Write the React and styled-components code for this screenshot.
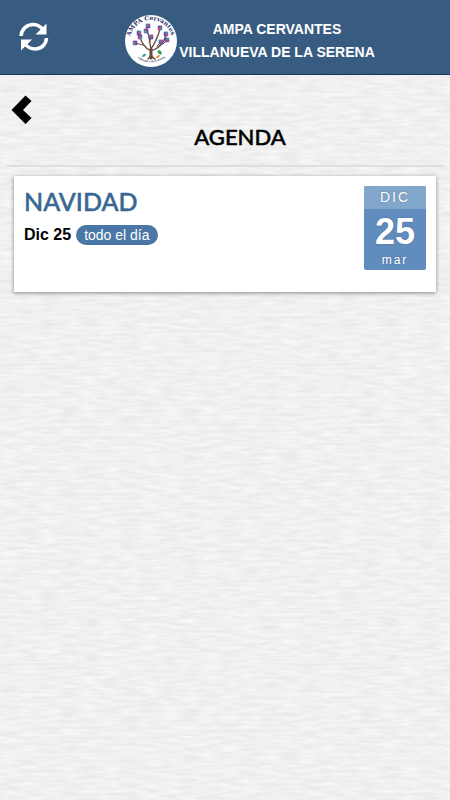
import React from "react";
import styled, { createGlobalStyle } from "styled-components";

const paper = encodeURIComponent(
  `<svg xmlns="http://www.w3.org/2000/svg" width="300" height="300"><filter id="p" x="0" y="0" width="100%" height="100%" color-interpolation-filters="sRGB"><feTurbulence type="fractalNoise" baseFrequency="0.05 0.3" numOctaves="3" seed="8" stitchTiles="stitch"/><feColorMatrix values="0.09 0 0 0 0.897  0.09 0 0 0 0.897  0.09 0 0 0 0.897  0 0 0 0 1"/></filter><rect width="300" height="300" filter="url(#p)"/></svg>`
);

const GlobalStyle = createGlobalStyle`
  *, *::before, *::after { box-sizing: border-box; }
  body {
    margin: 0;
    background: #f0f0f0 url("data:image/svg+xml,${paper}");
    font-family: "Liberation Sans", Arial, sans-serif;
    color: #000;
  }
`;

const Page = styled.div`
  min-height: 100vh;
`;

const Header = styled.header`
  display: grid;
  grid-template-columns: 68px 1fr 18px;
  align-items: center;
  height: 75px;
  background: #385c81;
  border-bottom: 1px solid #17375b;
`;

const IconButton = styled.button`
  display: flex;
  padding: 0;
  border: 0;
  background: none;
  color: ${(p) => p.$color};
  cursor: pointer;
`;

const HeaderAction = styled.div`
  padding-left: 18px;
`;

const Brand = styled.div`
  display: flex;
  align-items: center;
  justify-content: center;
  gap: 2px;
  padding-top: 8px;
  min-width: 0;
`;

const BrandName = styled.div`
  font-weight: bold;
  font-size: 14px;
  line-height: 23px;
  color: #fff;
  text-align: center;
  white-space: nowrap;
`;

const BackBar = styled.nav`
  padding: 20px 11px 0;
`;

const Title = styled.h1`
  margin: 0 7px;
  padding: 0 0 16px 30px;
  border-bottom: 2px solid #dfdfdf;
  font: 500 22px/24px Lato, sans-serif;
  -webkit-text-stroke: 0.5px currentColor;
  text-align: center;
`;

const EventCard = styled.article`
  display: flex;
  justify-content: space-between;
  align-items: flex-start;
  min-height: 116px;
  margin: 9px 14px 0;
  padding: 10px;
  background: #fff;
  box-shadow: 0 1px 4px rgba(0, 0, 0, 0.45);
`;

const EventTitle = styled.h2`
  margin: 0;
  font: 500 25px/31px Lato, sans-serif;
  color: #386793;
  -webkit-text-stroke: 0.5px currentColor;
`;

const EventMeta = styled.div`
  display: flex;
  align-items: center;
  gap: 5px;
  padding-top: 8px;
  font-size: 16px;
  line-height: 20px;
`;

const Pill = styled.span`
  padding: 0 8px;
  border-radius: 10px;
  background: #4a77a5;
  color: #fff;
  font-size: 14px;
`;

const DateBadge = styled.time`
  display: flex;
  flex-direction: column;
  width: 62px;
  height: 84px;
  overflow: hidden;
  border-radius: 2px;
  background: #608dbd;
  color: #fff;
  text-align: center;
  text-shadow: 0 0 2px rgba(30, 60, 100, 0.4);
`;

const Month = styled.span`
  background: #83a7cc;
  font-size: 14px;
  line-height: 23px;
  letter-spacing: 2px;
`;

const Day = styled.strong`
  font-size: 36px;
  line-height: 45px;
`;

const Weekday = styled.span`
  font-size: 12px;
  line-height: 12px;
  letter-spacing: 2px;
`;

const petals = ["#7b42a8", "#2d9db5", "#cc3f8f", "#3f58b5"];
const blooms = [
  [14, 18], [23, 11], [21, 16], [35, 13], [41, 19], [26, 22], [10, 28], [15, 22], [42, 25], [36, 27],
];

function Refresh() {
  return (
    <svg width="32" height="32" viewBox="0 0 32 32" aria-hidden="true">
      <g fill="none" stroke="currentColor" strokeWidth="3.500">
        <path d="M3 15C3.500 8 9 3.500 15 3.500c4 0 7.500 2 10 5" />
        <path d="M28.500 17C28 24 23 28 17 28c-4 0-7.500-2-10-5" />
      </g>
      <path fill="currentColor" d="M28.500 2.500V13.500H17.500zM3 29.500V18.500H14z" />
    </svg>
  );
}

function Back() {
  return (
    <svg width="22" height="30" viewBox="0 0 22 30" aria-hidden="true">
      <path d="M14.500 .5 20.500 6 12 15l8.500 8-6 6L.5 15z" fill="currentColor" />
    </svg>
  );
}

function Logo() {
  return (
    <svg width="52" height="52" viewBox="0 0 52 52" role="img" aria-label="AMPA Cervantes">
      <circle cx="26" cy="26" r="26" fill="#fff" />
      <defs>
        <path id="nameArc" d="M7.500 36A21 21 0 1 1 45 35" />
        <path id="townArc" d="M9 41Q26 54 44 40" />
      </defs>
      <text fontFamily="DejaVu Serif, serif" fontWeight="bold" fontSize="6" fill="#29306c">
        <textPath href="#nameArc" startOffset="50%" textAnchor="middle">AMPA Cervantes</textPath>
      </text>
      <text fontFamily="Liberation Serif, serif" fontWeight="bold" fontSize="3" fill="#29306c">
        <textPath href="#townArc" startOffset="50%" textAnchor="middle">Villanueva de la Serena</textPath>
      </text>
      <g fill="none" stroke="#6b4a3c" strokeLinecap="round">
        <path d="M26 43V34" strokeWidth="3" />
        <path d="M23 44Q26 42 26 38Q26 42 30 44" strokeWidth="1.500" />
        <path d="M26 36Q17 32 14 19M26 35Q25 25 22 14M26 34Q32 25 35 14M26 36Q38 32 41 20" strokeWidth="1.300" />
        <path d="M18 30L10 28M24 27L27 22M32 31L36 27M38 29L42 25" />
      </g>
      {blooms.map(([x, y], i) => (
        <g key={i}>
          {[[-1, -1], [1, -1], [1, 1], [-1, 1]].map(([dx, dy], j) => (
            <circle key={j} cx={x + dx} cy={y + dy} r="1.400" fill={petals[(i + j) % 4]} />
          ))}
          <circle cx={x} cy={y} r=".6" fill="#ef9a33" />
        </g>
      ))}
      <path d="M17 42q1-4 4-3q0 3-4 3z" fill="#24a6a1" />
      <path d="M34 39q-3-3 0-4q4 1 2 5z" fill="#30a15b" />
      <path d="M31 43q0-3 4-3q0 3-4 3z" fill="#e98a2a" />
    </svg>
  );
}

export default function App() {
  return (
    <Page>
      <GlobalStyle />
      <Header>
        <HeaderAction>
          <IconButton type="button" $color="#fff" aria-label="Actualizar"><Refresh /></IconButton>
        </HeaderAction>
        <Brand>
          <Logo />
          <BrandName>AMPA CERVANTES<br />VILLANUEVA DE LA SERENA</BrandName>
        </Brand>
      </Header>
      <main>
        <BackBar>
          <IconButton type="button" $color="#000" aria-label="Volver"><Back /></IconButton>
        </BackBar>
        <Title>AGENDA</Title>
        <EventCard>
          <div>
            <EventTitle>NAVIDAD</EventTitle>
            <EventMeta><strong>Dic 25</strong><Pill>todo el día</Pill></EventMeta>
          </div>
          <DateBadge dateTime="12-25">
            <Month>DIC</Month>
            <Day>25</Day>
            <Weekday>mar</Weekday>
          </DateBadge>
        </EventCard>
      </main>
    </Page>
  );
}
